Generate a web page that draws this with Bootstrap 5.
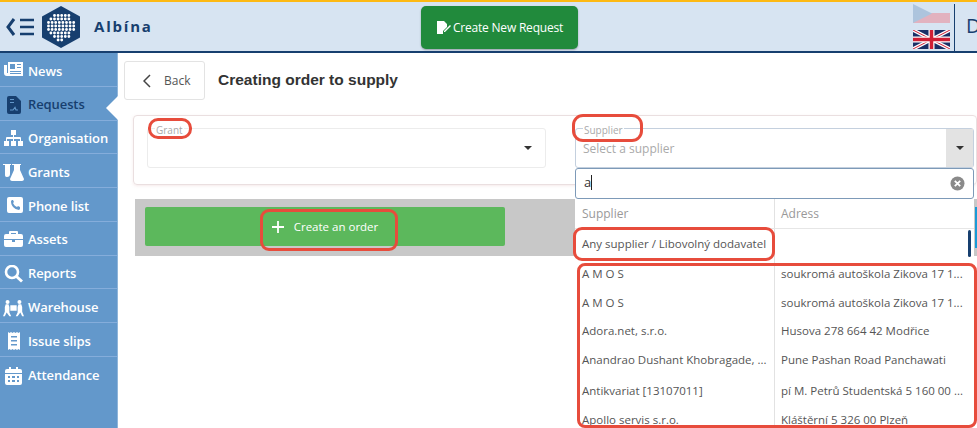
<!DOCTYPE html>
<html lang="en"><head><meta charset="utf-8"><title>Albína</title>
<link href="https://cdn.jsdelivr.net/npm/bootstrap@5.3.0/dist/css/bootstrap.min.css" rel="stylesheet">
<style>
html,body{height:428px;overflow:hidden}
body{font-family:"Open Sans","Noto Sans",sans-serif;font-size:12px;color:#444;background:#fff;width:977px}
.topbar{height:53px;background:#d7e4f2;border-top:2px solid #fdb913;border-bottom:2px solid #173f6f;overflow:hidden}
.logo-box{padding-left:6px}
.logo-hex{margin-left:8px}
.brand{color:#173f6f;font-size:15px;font-weight:700;letter-spacing:1.800px;margin-left:14px;width:327px;line-height:1}
.new-req{width:157px;height:43px;margin-top:4px;background:#218a3c;border-radius:5px;color:#fff;font-size:12px;letter-spacing:-.2px;box-shadow:0 1px 2px rgba(0,0,0,.3);gap:2px;flex:none}
.new-req:hover{background:#218a3c;color:#fff}
.flags{margin-left:335px;width:37px;gap:7px;margin-top:2px;flex:none}
.vline{border-left:1px solid #173f6f;height:47px;margin-left:4px;padding-left:11px;color:#173f6f;font-size:20px;line-height:44px;margin-top:2px}
.workarea{height:375px}
.sidenav{width:118px;background:#6398cb;border-right:1px solid #8fb5da;flex:none}
.navrow{height:33.750px;padding-top:4px;border-bottom:1px solid #85addb;color:#fff;font-size:13px;font-weight:600;padding-left:3px;gap:4px;position:relative;text-decoration:none;letter-spacing:-.1px}
.navrow:last-child{border-bottom:0}
.navrow.on{color:#173f6f}
.navrow svg{width:21px;height:18px;flex:none}
.navrow.on:after{content:"";position:absolute;right:-1px;top:9px;border:12px solid transparent;border-right:12px solid #fff;border-left:0}
.mainpane{position:relative;flex:1;min-width:0;overflow:hidden}
.headrow{padding:8px 0 0 6px;height:62px;gap:13px}
.backbtn{width:81px;height:39px;border:1px solid #e3e3e3;border-radius:3px;background:#fff;color:#555;font-size:12px;gap:13px;padding-left:18px}
.pgtitle{font-family:"Liberation Sans",sans-serif;font-weight:700;font-size:15.500px;color:#333;margin:0;line-height:20px;padding-top:9px}
.formpanel{margin-left:15px;width:844px;height:70px;border:1px solid #eadfe0;border-radius:4px;padding:12px 0 0 13px;gap:29px;box-shadow:0 1px 3px rgba(220,170,170,.25)}
.fieldbox{width:399px;height:40px;border:1px solid #ececec;border-radius:3px;position:relative;flex:none}
.fieldbox.sup{border-color:#c4d0de;color:#aaa;font-size:12px;padding:11px 7px}
.lgd{position:absolute;left:7px;top:-5px;background:#fff;padding:0 1px;color:#aaa;font-size:10px;line-height:13px}
.caret-d{position:absolute;right:13px;top:17px;border:4px solid transparent;border-top:4px solid #333;border-bottom:0}
.capbtn{position:absolute;right:0;top:0;bottom:0;width:27px;background:#e3e3e3;display:block}
.capbtn i{position:absolute;left:10px;top:17px;border:4px solid transparent;border-top:4px solid #333;border-bottom:0}
.greystrip{margin:14px 0 0 17px;width:842px;height:57px;background:#c8c8c8;padding:8px 0 8px 10px;gap:470px}
.makebtn{width:360px;height:39px;background:#5cb85c;border-radius:2px;color:#fff;font-size:11.500px;gap:10px;flex:none}
.makebtn:hover{background:#5cb85c;color:#fff}
.bluebtn{flex:1;background:#1a9ad6}
.dropbox{position:absolute;left:457px;top:115px;width:399px;height:262px;background:#fff;overflow:hidden}
.srch{height:31px;border:1px solid #7d9ab8;border-radius:3px;font-size:13px;color:#333;padding:4px 8px;position:relative}
.cursor{display:inline-block;width:1px;height:15px;background:#222;vertical-align:-3px}
.clearx{position:absolute;right:8px;top:7px;width:15px;height:15px}
.grid-h,.grid-r{display:flex;font-size:11.500px}
.grid-h{height:30px;color:#999;border-bottom:1px solid #e6e6e6;font-size:12px}
.grid-r{height:29.200px;color:#555}
.cellA{width:200px;border-right:1px solid #e2e2e2;padding:6px 7px;white-space:nowrap;overflow:hidden;flex:none}
.cellB{flex:1;padding:6px 6px;white-space:nowrap;overflow:hidden}
.grid-r:nth-child(n+4) .cellA,.grid-r:nth-child(n+4) .cellB{padding-top:7px}
.grid-r:nth-child(6) .cellA,.grid-r:nth-child(6) .cellB,.grid-r:nth-child(7) .cellA,.grid-r:nth-child(7) .cellB{padding-top:5.500px}
.thumb{position:absolute;left:393px;top:62px;width:3px;height:27px;background:#173f6f;border-radius:2px}
.redmark{position:absolute;border:3.500px solid #e74c3c;pointer-events:none}
</style></head><body>
<div class="topbar d-flex">
  <div class="logo-box d-flex align-items-center">
    <svg width="28" height="18" viewBox="0 0 28 18"><path d="M8 1 2 9l6 8" fill="none" stroke="#173f6f" stroke-width="3"/><path d="M14 2h14M14 9h14M14 16h14" stroke="#173f6f" stroke-width="2.400"/></svg>
    <svg class="logo-hex" width="38" height="42" viewBox="0 0 38 42"><path d="M19 0 38 10.500v21L19 42 0 31.500v-21z" fill="#173f6f"/>
    <g fill="none" stroke="#fff" stroke-width="2.900" stroke-linecap="round" stroke-dasharray="0 3.600">
      <path d="M12.500 9.500H27"/><path d="M8.900 13H30"/><path d="M6.500 16.500H32"/><path d="M6.500 20H32"/><path d="M6.500 23.500H32"/><path d="M8.900 27H30"/><path d="M12.500 30.500H27"/><path d="M16.100 34H23"/>
    </g></svg>
    <span class="brand">Albína</span>
  </div>
  <a class="btn new-req d-flex align-items-center justify-content-center p-0" href="#"><svg width="15" height="14" viewBox="0 0 15 14"><path d="M1 0h7l3 3v3L7 10v3H1z" fill="#fff"/><path d="M8 10l6-6 1 1-6 6H8z" fill="#fff"/></svg>Create New Request</a>
  <div class="flags d-flex flex-column">
    <svg width="37" height="19" viewBox="0 0 37 19"><rect width="37" height="9" fill="#d7e4f2"/><rect y="9" width="37" height="10" fill="#e2b2bf"/><path d="M0 0 19 9.500 0 19z" fill="#adc4dd"/></svg>
    <svg width="37" height="19" viewBox="0 0 37 19"><rect width="37" height="19" fill="#1a2f66"/><path d="M0 0 37 19M37 0 0 19" stroke="#fff" stroke-width="3.500"/><path d="M0 0 37 19M37 0 0 19" stroke="#cf1f35" stroke-width="1"/><path d="M18.500 0v19M0 9.500h37" stroke="#fff" stroke-width="6"/><path d="M18.500 0v19M0 9.500h37" stroke="#cf1f35" stroke-width="3.500"/></svg>
  </div>
  <div class="vline">D</div>
</div>
<div class="workarea d-flex">
  <nav class="sidenav d-flex flex-column">
    <a class="navrow d-flex align-items-center" href="#"><svg viewBox="0 0 21 18"><path d="M5 0h15v14H4a3 3 0 0 1-3-3V3h3v8h1zM7 2v5h5V2zm7 0v1h4V2zm0 3v1h4V5zM7 9v1h11V9zm0 2v1h11v-1z" fill="#fff" fill-rule="evenodd"/></svg>News</a>
    <a class="navrow on d-flex align-items-center" href="#"><svg viewBox="0 0 21 18"><path d="M6 0h7l5 5v11a2 2 0 0 1-2 2H6a2 2 0 0 1-2-2V2a2 2 0 0 1 2-2z" fill="#173f6f"/><path d="M7 3.500h4M7 6.500h4" stroke="#6398cb" stroke-width="1.200"/><path d="M7 14h3l2-2.500 1 2.500h2" fill="none" stroke="#6398cb" stroke-width="1.200"/></svg>Requests</a>
    <a class="navrow d-flex align-items-center" href="#"><svg viewBox="0 0 21 18"><path d="M8 0h5v5h-2v2h6a1 1 0 0 1 1 1v3h2v5h-5v-5h2V9h-6v2h2v5H8v-5h2V9H4v2h2v5H1v-5h2V8a1 1 0 0 1 1-1h6V5H8z" fill="#fff"/></svg>Organisation</a>
    <a class="navrow d-flex align-items-center" href="#"><svg viewBox="0 0 21 18"><path d="M0 0h8v1H7v9c0 2-1 3-3 3s-2-1-2-3V1H0zM9 0h9v1h-1v5l4 9c0 1-1 2-2 2H9c-1 0-2-1-2-2l4-9V1H9z" fill="#fff"/></svg>Grants</a>
    <a class="navrow d-flex align-items-center" href="#"><svg viewBox="0 0 21 18"><path d="M6 0h12a2 2 0 0 1 2 2v12a2 2 0 0 1-2 2H6a2 2 0 0 1-2-2V2a2 2 0 0 1 2-2zm3 3-1 1c0 5 3 8 8 9l1-1v-2l-2-1-1 1c-2-1-3-2-4-4l1-1-1-2z" fill="#fff" fill-rule="evenodd"/></svg>Phone list</a>
    <a class="navrow d-flex align-items-center" href="#"><svg viewBox="0 0 21 18"><path d="M7 0h7a1 1 0 0 1 1 1v2h3a2 2 0 0 1 2 2v3H1V5a2 2 0 0 1 2-2h3V1a1 1 0 0 1 1-1zm1 2v1h5V2zM1 9h8v2h3V9h8v5a2 2 0 0 1-2 2H3a2 2 0 0 1-2-2z" fill="#fff" fill-rule="evenodd"/></svg>Assets</a>
    <a class="navrow d-flex align-items-center" href="#"><svg viewBox="0 0 21 18"><circle cx="9" cy="7" r="6" fill="none" stroke="#fff" stroke-width="2.600"/><path d="M13.500 11.500 19 16.500" stroke="#fff" stroke-width="3"/></svg>Reports</a>
    <a class="navrow d-flex align-items-center" href="#"><svg viewBox="0 0 23 18"><circle cx="5" cy="2.500" r="2.200" fill="#fff"/><circle cx="18" cy="2.500" r="2.200" fill="#fff"/><path d="M8 6h7v6H8zM3 5h3l1 3v6l2 4H7l-3-4-2 4H0l2-5v-5zM17 5h3l1 3v5l2 5h-2l-2-4-3 4h-2l2-4V8z" fill="#fff"/></svg>Warehouse</a>
    <a class="navrow d-flex align-items-center" href="#"><svg viewBox="0 0 21 18"><path d="M5 0l1.500 1L8 0l1.500 1L11 0l1.500 1L14 0l1.500 1L17 0v18l-1.500-1-1.500 1-1.500-1-1.500 1-1.500-1L8 18l-1.500-1L5 18zm3 4v1.500h6V4zm0 4v1.500h6V8zm0 4v1.500h6V12z" fill="#fff" fill-rule="evenodd"/></svg>Issue slips</a>
    <a class="navrow d-flex align-items-center" href="#"><svg viewBox="0 0 21 18"><path d="M6 0h2v2h5V0h2v2h2a2 2 0 0 1 2 2v2H2V4a2 2 0 0 1 2-2h2zM2 7h17v9a2 2 0 0 1-2 2H4a2 2 0 0 1-2-2zm3 2v2h2V9zm4 0v2h3V9zm5 0v2h2V9zm-9 4v2h2v-2zm4 0v2h3v-2zm5 0v2h2v-2z" fill="#fff" fill-rule="evenodd"/></svg>Attendance</a>
  </nav>
  <main class="mainpane">
    <div class="headrow d-flex align-items-start">
      <a class="btn backbtn d-flex align-items-center" href="#"><svg width="8" height="14" viewBox="0 0 8 14"><path d="M7 1 1 7l6 6" fill="none" stroke="#444" stroke-width="1.500"/></svg>Back</a>
      <h1 class="pgtitle">Creating order to supply</h1>
    </div>
    <div class="formpanel d-flex">
      <div class="fieldbox"><span class="lgd">Grant</span><i class="caret-d"></i></div>
      <div class="fieldbox sup"><span class="lgd">Supplier</span>Select a supplier<span class="capbtn"><i></i></span></div>
    </div>
    <div class="greystrip d-flex"><a class="btn makebtn d-flex align-items-center justify-content-center p-0" href="#"><svg width="12" height="12" viewBox="0 0 12 12"><path d="M6 0v12M0 6h12" stroke="#fff" stroke-width="1.800"/></svg>Create an order</a><span class="bluebtn"></span></div>
    <div class="dropbox">
      <div class="srch">a<span class="cursor"></span><svg class="clearx" viewBox="0 0 15 15"><circle cx="7.500" cy="7.500" r="7" fill="#8a8a8a"/><path d="M4.800 4.800l5.400 5.400M10.200 4.800l-5.400 5.400" stroke="#fff" stroke-width="1.800"/></svg></div>
      <div class="grid-h"><div class="cellA">Supplier</div><div class="cellB">Adress</div></div>
      <div class="grid-r"><div class="cellA">Any supplier / Libovolný dodavatel</div><div class="cellB"></div></div>
      <div class="grid-r"><div class="cellA">A M O S</div><div class="cellB">soukromá autoškola Zikova 17 1...</div></div>
      <div class="grid-r"><div class="cellA">A M O S</div><div class="cellB">soukromá autoškola Zikova 17 1...</div></div>
      <div class="grid-r"><div class="cellA">Adora.net, s.r.o.</div><div class="cellB">Husova 278 664 42 Modřice</div></div>
      <div class="grid-r"><div class="cellA">Anandrao Dushant Khobragade, ...</div><div class="cellB">Pune Pashan Road Panchawati</div></div>
      <div class="grid-r"><div class="cellA">Antikvariat [13107011]</div><div class="cellB">pí M. Petrů Studentská 5 160 00 ...</div></div>
      <div class="grid-r"><div class="cellA">Apollo servis s.r.o.</div><div class="cellB">Kláštěrní 5 326 00 Plzeň</div></div>
      <span class="thumb"></span>
    </div>
  </main>
</div>
<span class="redmark" style="left:148px;top:118px;width:44px;height:21px;border-radius:10px"></span>
<span class="redmark" style="left:572px;top:114px;width:71px;height:28px;border-radius:11px"></span>
<span class="redmark" style="left:260px;top:209px;width:138px;height:42px;border-radius:9px"></span>
<span class="redmark" style="left:573px;top:227px;width:202px;height:34px;border-radius:9px"></span>
<span class="redmark" style="left:577px;top:263px;width:400px;height:165px;border-radius:8px"></span>
</body></html>
